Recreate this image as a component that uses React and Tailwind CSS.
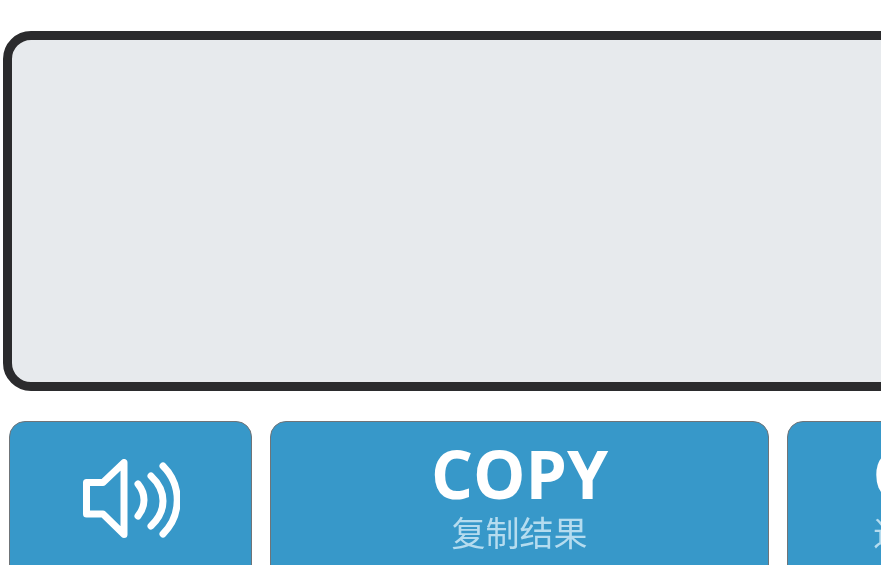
function SpeakerIcon() {
  return (
    <svg width="97" height="79" viewBox="0 0 97 79" fill="none" stroke="white" strokeWidth="7" strokeLinecap="round" strokeLinejoin="round">
      <path d="M3.5 23.5 L20 23.5 L41 3.5 L41 75.5 L20 55 L3.5 55 Z" />
      <path d="M55 25 C63 35 63 47 55 57" />
      <path d="M68 17 C84 32 84 52 68 67" />
      <path d="M80 7 C99 26 99 56 80 75" />
    </svg>
  );
}

function ActionButton({ title, sub, className, children }) {
  return (
    <button className={"h-[160px] shrink-0 rounded-[16px] border border-[#6f7478] bg-[#3798c9] flex flex-col items-center text-white " + className}>
      {children || (
        <>
          <span className="mt-[15px] text-[66px] leading-[72px] font-bold font-['Open_Sans',sans-serif] blur-[0.5px]">{title}</span>
          <span className="mt-[1px] text-[34px] leading-[44px] text-[#b5dcef] font-['Noto_Sans_CJK_SC',sans-serif] blur-[0.5px]">{sub}</span>
        </>
      )}
    </button>
  );
}

export default function App() {
  return (
    <div className="h-[565px] w-[881px] overflow-hidden bg-white">
      <div className="ml-[3px] mt-[31px] h-[360px] w-[1200px] rounded-[28px] border-[9px] border-[#2b2b2d] bg-[#e7eaed]" />
      <div className="mt-[30px] ml-[9px] flex gap-[18px]">
        <ActionButton className="w-[243px]">
          <span className="mt-[37px] ml-[2px] blur-[0.5px]"><SpeakerIcon /></span>
        </ActionButton>
        <ActionButton className="w-[499px]" title="COPY" sub="复制结果" />
        <ActionButton className="w-[376px]" title="CLOSE" sub="退出当前结果" />
      </div>
    </div>
  );
}
